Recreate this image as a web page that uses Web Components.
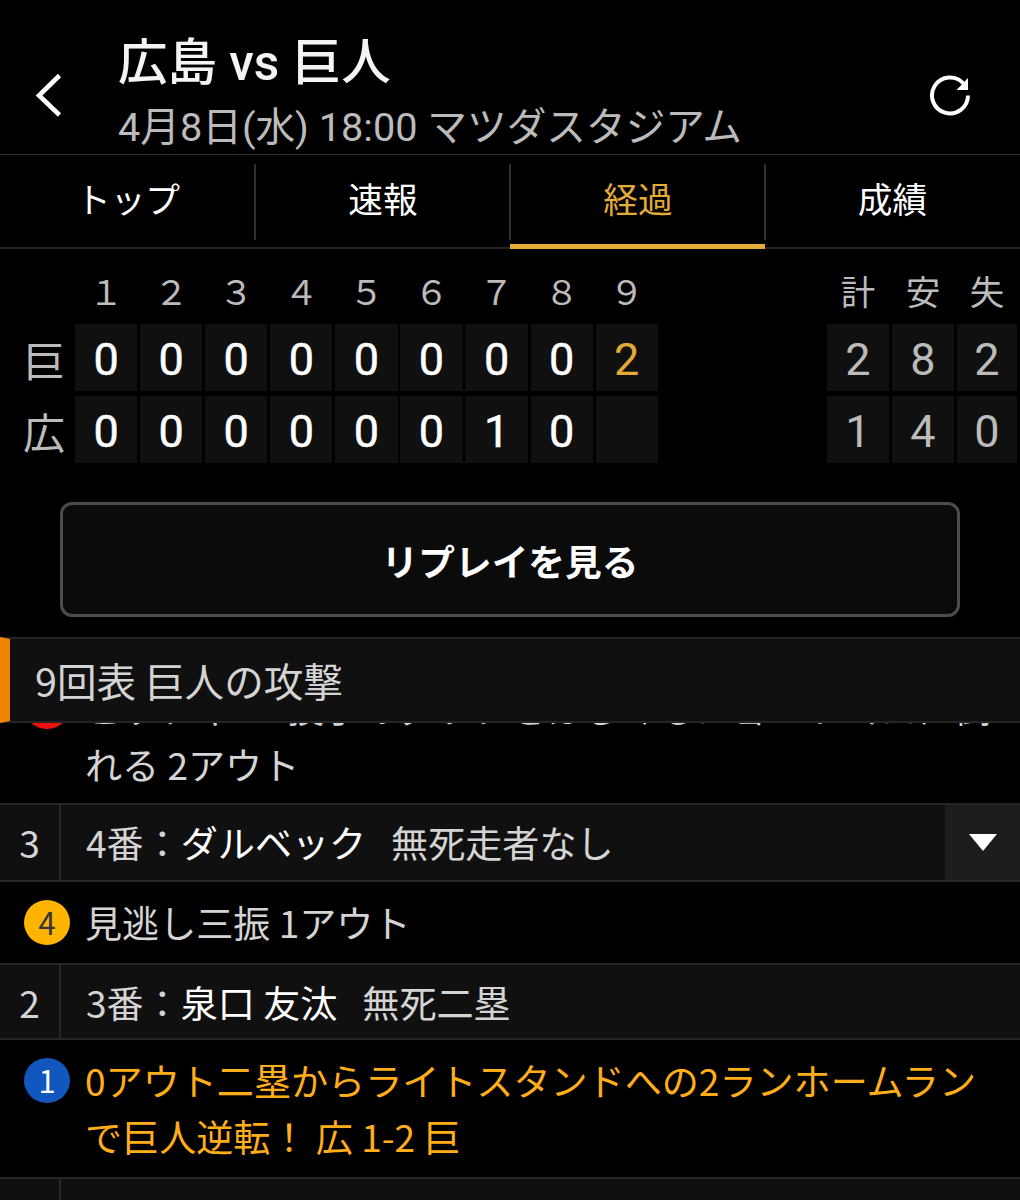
<!DOCTYPE html>
<html lang="ja">
<head>
<meta charset="utf-8">
<title>広島 vs 巨人</title>
<style>
html,body{margin:0;background:#000}
body{height:1200px;overflow:hidden;font-family:"Noto Sans CJK JP",sans-serif;color:#d4d4d4}
</style>
</head>
<body>
<game-app></game-app>
<script>
const define=(name,html)=>customElements.define(name,class extends HTMLElement{
  constructor(){super();this.attachShadow({mode:'open'})}
  connectedCallback(){this.shadowRoot.innerHTML=typeof html==='function'?html(this):html}
});

define('game-header',`<style>
:host{display:flex;height:155px;box-sizing:border-box;border-bottom:1px solid #303030;background:#000}
.back{width:118px;flex:none;padding:73px 0 0 35px;box-sizing:border-box}
.copy{flex:1;display:flex;flex-direction:column;padding-top:28px;white-space:nowrap;font-family:Roboto,"Noto Sans CJK JP",sans-serif}
h1{margin:0;font-size:49.500px;line-height:70px;height:70px;font-weight:500;color:#f4f4f4}
p{margin:0;font-size:39.670px;line-height:60px;height:56px;color:#bbb}
.reload{width:91px;flex:none;padding-top:73px}
svg{display:block}
</style>
<div class="back"><svg width="28" height="45" viewBox="0 0 28 45"><path d="M24.500 2.500 4 22.500 24.500 42" fill="none" stroke="#fff" stroke-width="4.600"/></svg></div>
<div class="copy"><h1><slot name="title"></slot></h1><p><slot name="info"></slot></p></div>
<div class="reload"><svg width="44" height="44" viewBox="0 0 44 44"><path d="M39 22.500A18 18 0 1 1 34.500 10.500" fill="none" stroke="#fff" stroke-width="4"/><path d="M39 5V17H27.500Z" fill="#fff"/></svg></div>`);

define('tab-item',`<style>
:host{flex:1;display:flex;justify-content:center;box-sizing:border-box;height:94px;padding-top:9px;border-bottom:2px solid #242424;color:#fff;font-size:34.700px;line-height:68px}
:host([active]){color:#e3aa38;border-bottom:5px solid #e5ac35}
span{flex:1;text-align:center;height:76px;box-sizing:border-box;padding-left:2px;margin-right:-1px;border-right:2px solid #303030}
:host([last]) span{border:0;margin:0;padding:0}
</style><span><slot></slot></span>`);

define('game-tabs',`<style>:host{display:flex;height:94px}</style>
<tab-item>トップ</tab-item><tab-item>速報</tab-item><tab-item active>経過</tab-item><tab-item last>成績</tab-item>`);

define('score-cell',`<style>
:host{display:block;width:62.200px;height:67px;background:#101010;text-align:center;font:400 45px/71px Roboto,sans-serif;color:#fff;-webkit-text-stroke:.5px #fff}
:host([head]){height:72px;background:none;font:34.500px/82px "Noto Sans CJK JP",sans-serif;color:#bbb;-webkit-text-stroke:0}
:host([total]){color:#bbb;-webkit-text-stroke:0}
:host([hot]){color:#e3aa38;-webkit-text-stroke:0}
:host([last]){width:60px}
</style><slot></slot>`);

const scoreRow=(team,innings,totals,head)=>`<div class="row${head?' head':''}"><span class="team">${team}</span><div class="set">${
  innings.map((v,i)=>`<score-cell ${head?'head':''} ${!head&&i===8?'hot':''}>${v}</score-cell>`).join('')
}</div><div class="set">${totals.map((v,i)=>`<score-cell total ${head?'head':''} ${i===2?'last':''}>${v}</score-cell>`).join('')}</div></div>`;

define('score-board',()=>`<style>
:host{display:flex;flex-direction:column;height:253px}
.row{display:flex;height:72px}
.row.head{height:75px}
.team{width:75px;flex:none;box-sizing:border-box;padding-left:23px;font-size:42px;line-height:69px;color:#bbb}
.set{display:flex;gap:2.900px}
.set:last-child{margin-left:auto;padding-right:3px}
</style>`
+scoreRow('',['１','２','３','４','５','６','７','８','９'],['計','安','失'],true)
+scoreRow('巨',[0,0,0,0,0,0,0,0,2],[2,8,2])
+scoreRow('広',[0,0,0,0,0,0,1,0,''],[1,4,0]));

define('replay-button',`<style>
:host{display:block;padding:0 60px}
button{display:block;width:100%;height:115px;box-sizing:border-box;border:3px solid #4c4c4c;border-radius:12px;background:#0b0b0b;color:#fff;font:700 36.700px/1 "Noto Sans CJK JP",sans-serif;padding:2px 0 0;margin:0}
</style><button><slot></slot></button>`);

define('inning-bar',`<style>
:host{display:block;position:relative;z-index:1;height:86px;box-sizing:border-box;margin-top:20px;border-left:10px solid #f28500;border-top:2px solid #242424;border-bottom:2px solid #242424;background:#101010;padding-left:25px;font-size:39.600px;line-height:82px;color:#d4d4d4}
</style><slot></slot>`);

define('at-bat',e=>`<style>
:host{display:flex;height:78px;box-sizing:border-box;border-top:2px solid #262626;border-bottom:2px solid #262626;background:#101010;font-size:37.100px;line-height:74px;white-space:pre}
.no{width:61px;flex:none;box-sizing:border-box;border-right:2px solid #262626;text-align:center}
.text{flex:1;padding-left:25px}
.toggle{width:75px;display:flex;align-items:center;justify-content:center;background:#1d1d1d}
::slotted(b){font-weight:400;color:#fff}
</style><span class="no">${e.getAttribute('no')}</span><span class="text"><slot></slot></span>${
e.hasAttribute('toggle')?'<span class="toggle"><svg width="28" height="17" viewBox="0 0 28 17"><path d="M0 0H28L14 17Z" fill="#fff"/></svg></span>':''}`);

define('play-line',e=>`<style>
:host{display:flex;padding:12px 0 0 24px;box-sizing:border-box;font-size:37.100px;line-height:55.500px;color:#d4d4d4}
:host([score]){color:#ffae19}
.ball{width:46px;height:45px;flex:none;border-radius:50%;margin:6px 15px 0 0;background:${e.getAttribute('ball')};color:${e.getAttribute('ink')||'#fff'};font-size:31px;line-height:43px;text-align:center}
.text{white-space:pre;margin-top:1px}
</style><span class="ball">${e.getAttribute('no')}</span><span class="text"><slot></slot></span>`);

define('game-app',`<style>
:host{display:block;width:1020px;height:1200px;overflow:hidden;background:#000}
.feed{display:flex;flex-direction:column}
.p1{height:137px;margin-top:-57px;line-height:56.500px}
.p2{height:81px}
.p3{height:137px}
.b1{height:79px}
.b2{height:77px}
</style>
<game-header><span slot="title">広島 vs 巨人</span><span slot="info">4月8日(水) 18:00 マツダスタジアム</span></game-header>
<game-tabs></game-tabs>
<score-board></score-board>
<replay-button>リプレイを見る</replay-button>
<inning-bar>9回表 巨人の攻撃</inning-bar>
<div class="feed">
<play-line class="p1" no="3" ball="#f01010">ピッチャー&nbsp;&nbsp;投手のグラブをはじくもショートゴロに倒<br>れる 2アウト</play-line>
<at-bat class="b1" no="3" toggle>4番：<b>ダルベック</b><span>&nbsp;&nbsp; </span>無死走者なし</at-bat>
<play-line class="p2" no="4" ball="#ffb400" ink="#333">見逃し三振 1アウト</play-line>
<at-bat class="b2" no="2">3番：<b>泉口 友汰</b><span>&nbsp;&nbsp; </span>無死二塁</at-bat>
<play-line class="p3" no="1" ball="#1257bd" score>0アウト二塁からライトスタンドへの2ランホームラン<br>で巨人逆転！ 広 1-2 巨</play-line>
<at-bat no="1">2番：<b>キャベッジ</b><span>&nbsp;&nbsp; </span>無死走者なし</at-bat>
</div>`);
</script>
</body>
</html>
